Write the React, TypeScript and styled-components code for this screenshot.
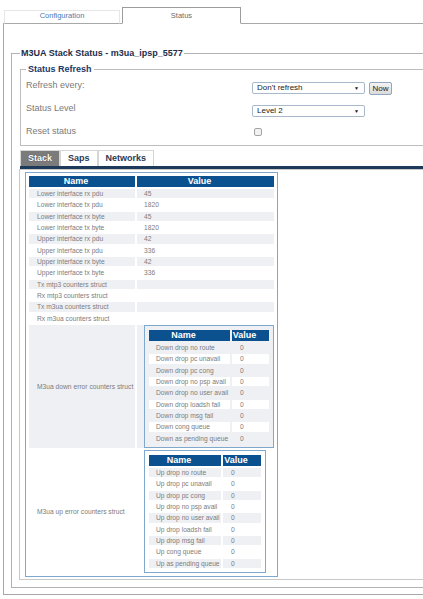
import React from "react";
import styled, { createGlobalStyle } from "styled-components";

const GlobalStyle = createGlobalStyle`
  html, body { margin: 0; padding: 0; overflow: hidden; background: #fff; }
  body { font-family: "Liberation Sans", Arial, sans-serif; }
`;

const Page = styled.div`
  padding: 7px 0 0 3px;
  width: 760px;
`;

const TopTabs = styled.div`
  display: flex;
  align-items: flex-end;
  height: 17px;
  margin-bottom: -1px;
  position: relative;
  z-index: 1;
`;

const TopTab = styled.div<{ $active?: boolean }>`
  box-sizing: border-box;
  display: flex;
  align-items: center;
  justify-content: center;
  font-size: 7.5px;
  background: #fff;
  ${(p) =>
    p.$active
      ? `
    width: 119px;
    height: 17px;
    margin-left: 2px;
    border: 1px solid #9c9c9c;
    border-bottom: 1px solid #fff;
    color: #6a6a6a;
  `
      : `
    width: 116px;
    height: 14px;
    margin-left: 1px;
    padding-bottom: 3px;
    border: 1px solid #e6e6e6;
    border-bottom: 1px solid #a8a8a8;
    color: #4a7ab0;
  `}
`;

const Panel = styled.div`
  border: 1px solid #a8a8a8;
  padding: 24px 0 6px 7px;
`;

const StackFieldset = styled.fieldset`
  margin: 0;
  min-width: 0;
  border: 1px solid #b2b2b2;
  padding: 5px 0 7px 8px;
`;

const StackLegend = styled.legend`
  padding: 0 1px;
  font-size: 9px;
  line-height: 11px;
  font-weight: bold;
  color: #1e2d4b;
`;

const RefreshFieldset = styled.fieldset`
  margin: 0;
  min-width: 0;
  border: 1px solid #bdbdbd;
  padding: 5px 0 8px 5px;
`;

const RefreshLegend = styled.legend`
  padding: 0 2px;
  font-size: 9px;
  line-height: 11px;
  font-weight: bold;
  color: #1d3766;
`;

const FormRow = styled.div<{ $h: number }>`
  display: grid;
  grid-template-columns: 226px auto;
  align-items: start;
  height: ${(p) => p.$h}px;
`;

const Label = styled.div`
  font-size: 9px;
  line-height: 11px;
  color: #7a7a7a;
`;

const Controls = styled.div`
  display: flex;
  align-items: flex-start;
  gap: 4px;
  padding-top: 2px;
`;

const SelectWrap = styled.div`
  position: relative;
  width: 113px;
  height: 12px;
`;

const Select = styled.select`
  display: block;
  appearance: none;
  -webkit-appearance: none;
  box-sizing: border-box;
  width: 100%;
  height: 12px;
  margin: 0;
  padding: 0 0 0 4px;
  border: 1px solid #a9b9cc;
  border-radius: 2px;
  background: #fff;
  font-family: "Liberation Sans", Arial, sans-serif;
  font-size: 8px;
  line-height: 10px;
  color: #222;
  outline: none;
`;

const Arrow = styled.span`
  position: absolute;
  right: 6px;
  top: 3px;
  font-size: 5px;
  line-height: 6px;
  color: #111;
  pointer-events: none;
`;

const NowButton = styled.button`
  display: block;
  box-sizing: border-box;
  width: 23px;
  height: 13px;
  margin: 0;
  padding: 0;
  border: 1px solid #90a6c1;
  border-radius: 2px;
  background: linear-gradient(#f3f3f3, #dadada);
  font-family: "Liberation Sans", Arial, sans-serif;
  font-size: 8px;
  line-height: 11px;
  color: #1a1a1a;
`;

const Check = styled.input`
  display: block;
  appearance: none;
  -webkit-appearance: none;
  box-sizing: border-box;
  width: 8px;
  height: 8px;
  margin: 2px 0 0 2px;
  border: 1px solid #a3a3a3;
  border-radius: 2px;
  background: #f2f2f2;
`;

const TabBar = styled.div`
  display: flex;
  margin-top: 4px;
  height: 16px;
`;

const TabButton = styled.div<{ $active?: boolean }>`
  box-sizing: border-box;
  height: 16px;
  padding: 0 7px;
  border: 1px solid #d6d6d6;
  border-bottom: none;
  font-size: 9px;
  line-height: 15px;
  font-weight: bold;
  color: ${(p) => (p.$active ? "#fff" : "#2b3a55")};
  background: ${(p) => (p.$active ? "#7b7b7b" : "#fff")};
  text-shadow: ${(p) => (p.$active ? "0 0 1px #333" : "none")};
`;

const NavyBar = styled.div`
  height: 3px;
  background: #1d3a5b;
`;

const TabContent = styled.div`
  margin-left: -1px;
  border: 1px solid #c9c9c9;
  padding: 2px 0 2px 5px;
`;

const BlueBox = styled.div<{ $pad: number }>`
  width: fit-content;
  border: 1px solid #7fa8cc;
  padding: ${(p) => p.$pad}px;
`;

const Table = styled.table`
  border-collapse: separate;
  border-spacing: 2px;
  table-layout: fixed;
`;

const Col = styled.col<{ $w: number }>`
  width: ${(p) => p.$w}px;
`;

const Th = styled.th`
  height: 11px;
  padding: 0 12px 0 0;
  background: #0b5190;
  color: #fff;
  font-size: 9px;
  line-height: 11px;
  font-weight: bold;
  text-align: center;
`;

const Tr = styled.tr<{ $odd: boolean }>`
  background: ${(p) => (p.$odd ? "#eff0f4" : "#fff")};
`;

const Td = styled.td<{ $pl: number }>`
  height: 9.33px;
  padding: 0 0 0 ${(p) => p.$pl}px;
  font-size: 6.7px;
  line-height: 9px;
  color: #7c7c7c;
  white-space: nowrap;
  overflow: hidden;
  vertical-align: middle;
`;

const NestCell = styled.td`
  padding: 0 0 0 7px;
  vertical-align: middle;
`;

const mainRows: [string, string][] = [
  ["Lower interface rx pdu", "45"],
  ["Lower interface tx pdu", "1820"],
  ["Lower interface rx byte", "45"],
  ["Lower interface tx byte", "1820"],
  ["Upper interface rx pdu", "42"],
  ["Upper interface tx pdu", "336"],
  ["Upper interface rx byte", "42"],
  ["Upper interface tx byte", "336"],
  ["Tx mtp3 counters struct", ""],
  ["Rx mtp3 counters struct", ""],
  ["Tx m3ua counters struct", ""],
  ["Rx m3ua counters struct", ""],
];

const errNames = [
  "drop no route",
  "drop pc unavail",
  "drop pc cong",
  "drop no psp avail",
  "drop no user avail",
  "drop loadsh fail",
  "drop msg fail",
  "cong queue",
  "as pending queue",
];

function ErrorTable({ prefix, nameW, valueW }: { prefix: string; nameW: number; valueW: number }) {
  return (
    <BlueBox $pad={2}>
      <Table>
        <colgroup>
          <Col $w={nameW} />
          <Col $w={valueW} />
        </colgroup>
        <thead>
          <tr>
            <Th>Name</Th>
            <Th>Value</Th>
          </tr>
        </thead>
        <tbody>
          {errNames.map((n, i) => (
            <Tr key={n} $odd={i % 2 === 0}>
              <Td $pl={7}>{`${prefix} ${n}`}</Td>
              <Td $pl={8}>0</Td>
            </Tr>
          ))}
        </tbody>
      </Table>
    </BlueBox>
  );
}

export default function App() {
  return (
    <>
      <GlobalStyle />
      <Page>
        <TopTabs>
          <TopTab>Configuration</TopTab>
          <TopTab $active>Status</TopTab>
        </TopTabs>
        <Panel>
          <StackFieldset>
            <StackLegend>M3UA Stack Status - m3ua_ipsp_5577</StackLegend>
            <RefreshFieldset>
              <RefreshLegend>Status Refresh</RefreshLegend>
              <FormRow $h={23}>
                <Label>Refresh every:</Label>
                <Controls>
                  <SelectWrap>
                    <Select defaultValue="none">
                      <option value="none">Don't refresh</option>
                      <option value="5">5 seconds</option>
                    </Select>
                    <Arrow>▼</Arrow>
                  </SelectWrap>
                  <NowButton>Now</NowButton>
                </Controls>
              </FormRow>
              <FormRow $h={23}>
                <Label>Status Level</Label>
                <Controls>
                  <SelectWrap>
                    <Select defaultValue="2">
                      <option value="1">Level 1</option>
                      <option value="2">Level 2</option>
                    </Select>
                    <Arrow>▼</Arrow>
                  </SelectWrap>
                </Controls>
              </FormRow>
              <FormRow $h={11}>
                <Label>Reset status</Label>
                <Check type="checkbox" />
              </FormRow>
            </RefreshFieldset>

            <TabBar>
              <TabButton $active>Stack</TabButton>
              <TabButton>Saps</TabButton>
              <TabButton>Networks</TabButton>
            </TabBar>
            <NavyBar />
            <TabContent>
              <BlueBox $pad={1}>
                <Table>
                  <colgroup>
                    <Col $w={106} />
                    <Col $w={137} />
                  </colgroup>
                  <thead>
                    <tr>
                      <Th>Name</Th>
                      <Th>Value</Th>
                    </tr>
                  </thead>
                  <tbody>
                    {mainRows.map(([n, v], i) => (
                      <Tr key={n} $odd={i % 2 === 0}>
                        <Td $pl={8}>{n}</Td>
                        <Td $pl={7}>{v}</Td>
                      </Tr>
                    ))}
                    <Tr $odd>
                      <Td $pl={8}>M3ua down error counters struct</Td>
                      <NestCell>
                        <ErrorTable prefix="Down" nameW={81} valueW={37} />
                      </NestCell>
                    </Tr>
                    <Tr $odd={false}>
                      <Td $pl={8}>M3ua up error counters struct</Td>
                      <NestCell>
                        <ErrorTable prefix="Up" nameW={72} valueW={38} />
                      </NestCell>
                    </Tr>
                  </tbody>
                </Table>
              </BlueBox>
            </TabContent>
          </StackFieldset>
        </Panel>
      </Page>
    </>
  );
}
